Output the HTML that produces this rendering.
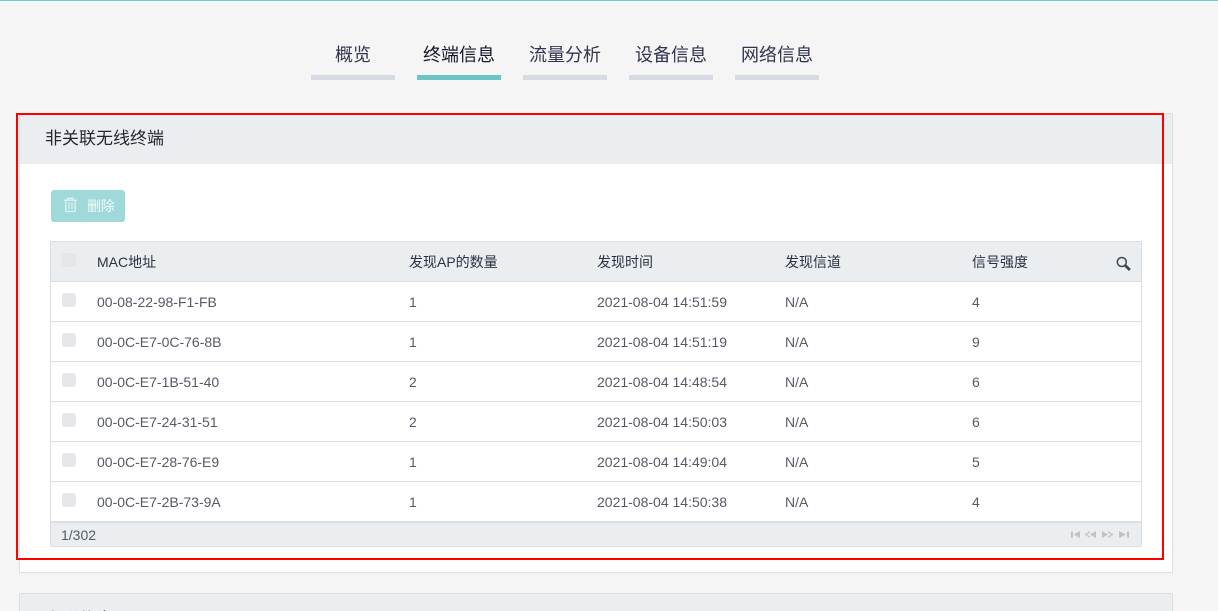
<!DOCTYPE html>
<html lang="zh"><head><meta charset="utf-8"><title>非关联无线终端</title>
<style>
*{box-sizing:border-box}
html,body{margin:0;padding:0;width:1218px;height:611px;overflow:hidden;background:#f5f5f5;font-family:"Liberation Sans","Noto Sans CJK SC",sans-serif;font-size:14px;color:#555a66}
.a{position:absolute}
.tab{position:absolute;top:38px;width:84px;height:42px;border-bottom:5px solid #d6dbe3;text-align:center;font-size:18px;line-height:34px;color:#2f3550}
.tab.on{border-bottom-color:#6cc4c4;color:#15182a}
.cell{position:absolute;line-height:40px;height:40px;white-space:nowrap}
.h{color:#2c3040}
.cb{position:absolute;left:62px;width:14px;height:14px;border-radius:3px;background:#e4e6ea}
.line{position:absolute;left:51px;width:1090px;height:1px;background:#dcdee1}
</style></head><body>
<div class="a" style="left:0;top:0;width:1218px;height:1px;background:#6cc9cc"></div>
<div class="tab" style="left:311px">概览</div>
<div class="tab on" style="left:417px">终端信息</div>
<div class="tab" style="left:523px">流量分析</div>
<div class="tab" style="left:629px">设备信息</div>
<div class="tab" style="left:735px">网络信息</div>

<div class="a" style="left:19px;top:113px;width:1154px;height:460px;background:#fff;border:1px solid #dedfe0"></div>
<div class="a" style="left:20px;top:114px;width:1152px;height:50px;background:#ebeef1"></div>
<div class="a" style="left:45px;top:126px;font-size:17px;line-height:26px;color:#23262f">非关联无线终端</div>

<div class="a" style="left:51px;top:190px;width:74px;height:32px;border-radius:3px;background:#9fd9d9"></div>
<svg class="a" style="left:63px;top:197px" width="15" height="16" viewBox="0 0 15 16" fill="none" stroke="#dff3f3" stroke-width="1.3"><path d="M1 3.200h13M5 3V1.300h5V3M2.800 3v10.800c0 .4.300.7.700.7h8c.4 0 .7-.3.700-.7V3M6 5.500v7M9 5.500v7"/></svg>
<div class="a" style="left:87px;top:196px;font-size:14px;line-height:20px;color:#f2fbfb;letter-spacing:-.2px">删除</div>

<div class="a" style="left:50px;top:241px;width:1092px;height:306px;background:#fff;border:1px solid #dcdee1"></div>
<div class="a" style="left:51px;top:242px;width:1090px;height:39px;background:#ebeef1"></div>
<div class="line" style="top:281px"></div>
<div class="line" style="top:321px"></div>
<div class="line" style="top:361px"></div>
<div class="line" style="top:401px"></div>
<div class="line" style="top:441px"></div>
<div class="line" style="top:481px"></div>
<div class="a" style="left:51px;top:521px;width:1090px;height:25px;background:#ebeef1;border-top:2px solid #dcdee1"></div>

<div class="cb" style="top:253px"></div>
<div class="cell h" style="left:97px;top:242px">MAC地址</div>
<div class="cell h" style="left:409px;top:242px">发现AP的数量</div>
<div class="cell h" style="left:597px;top:242px">发现时间</div>
<div class="cell h" style="left:785px;top:242px">发现信道</div>
<div class="cell h" style="left:972px;top:242px">信号强度</div>
<svg class="a" style="left:1116px;top:256px" width="16" height="16" viewBox="0 0 16 16" fill="none" stroke="#3f4552"><circle cx="5.800" cy="6" r="4.500" stroke-width="1.500"/><path d="M9.300 9.500l4.600 4.500" stroke-width="2.800"/></svg>

<div class="cb" style="top:293px"></div>
<div class="cell" style="left:97px;top:282px">00-08-22-98-F1-FB</div>
<div class="cell" style="left:409px;top:282px">1</div>
<div class="cell" style="left:597px;top:282px">2021-08-04 14:51:59</div>
<div class="cell" style="left:785px;top:282px">N/A</div>
<div class="cell" style="left:972px;top:282px">4</div>

<div class="cb" style="top:333px"></div>
<div class="cell" style="left:97px;top:322px">00-0C-E7-0C-76-8B</div>
<div class="cell" style="left:409px;top:322px">1</div>
<div class="cell" style="left:597px;top:322px">2021-08-04 14:51:19</div>
<div class="cell" style="left:785px;top:322px">N/A</div>
<div class="cell" style="left:972px;top:322px">9</div>

<div class="cb" style="top:373px"></div>
<div class="cell" style="left:97px;top:362px">00-0C-E7-1B-51-40</div>
<div class="cell" style="left:409px;top:362px">2</div>
<div class="cell" style="left:597px;top:362px">2021-08-04 14:48:54</div>
<div class="cell" style="left:785px;top:362px">N/A</div>
<div class="cell" style="left:972px;top:362px">6</div>

<div class="cb" style="top:413px"></div>
<div class="cell" style="left:97px;top:402px">00-0C-E7-24-31-51</div>
<div class="cell" style="left:409px;top:402px">2</div>
<div class="cell" style="left:597px;top:402px">2021-08-04 14:50:03</div>
<div class="cell" style="left:785px;top:402px">N/A</div>
<div class="cell" style="left:972px;top:402px">6</div>

<div class="cb" style="top:453px"></div>
<div class="cell" style="left:97px;top:442px">00-0C-E7-28-76-E9</div>
<div class="cell" style="left:409px;top:442px">1</div>
<div class="cell" style="left:597px;top:442px">2021-08-04 14:49:04</div>
<div class="cell" style="left:785px;top:442px">N/A</div>
<div class="cell" style="left:972px;top:442px">5</div>

<div class="cb" style="top:493px"></div>
<div class="cell" style="left:97px;top:482px">00-0C-E7-2B-73-9A</div>
<div class="cell" style="left:409px;top:482px">1</div>
<div class="cell" style="left:597px;top:482px">2021-08-04 14:50:38</div>
<div class="cell" style="left:785px;top:482px">N/A</div>
<div class="cell" style="left:972px;top:482px">4</div>

<div class="a" style="left:61px;top:525px;line-height:20px">1/302</div>
<svg class="a" style="left:1070px;top:530px" width="60" height="9" viewBox="0 0 60 9"><g fill="#c0c2c6"><path d="M1 1.500h2v6H1zM10 1v7L3.500 4.500z"/><path d="M26 1v7L20 4.500z"/><path d="M32 1l6 3.500-6 3.500z"/><path d="M49 1l7 3.500L49 8zM57 1.500h2v6h-2z"/></g><g fill="none" stroke="#c0c2c6" stroke-width="1.200"><path d="M20 1.800l-4.500 2.700L20 7.200"/><path d="M38 1.800l4.500 2.700L38 7.200"/></g></svg>

<div class="a" style="left:19px;top:593px;width:1154px;height:18px;background:#ebeef1;border:1px solid #dedfe0;border-bottom:0;overflow:hidden"><div class="a" style="left:25px;top:13px;font-size:17px;line-height:26px;color:#23262f;white-space:nowrap">上联信息</div></div>

<div class="a" style="left:16px;top:113px;width:1148px;height:447px;border:2px solid #f00"></div>
</body></html>
